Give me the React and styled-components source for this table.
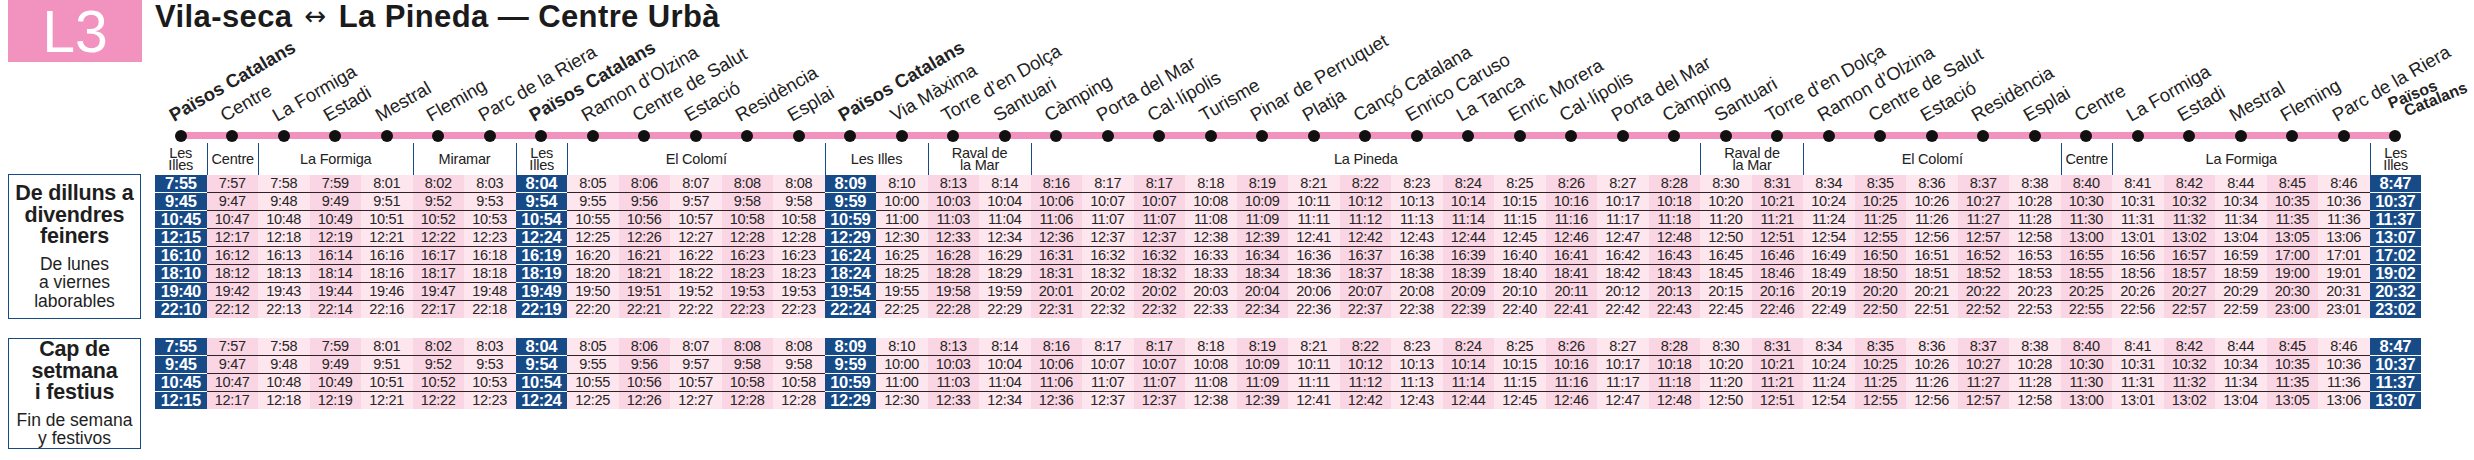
import React from "react";
import styled, { createGlobalStyle } from "styled-components";

const COL = 51.5;
const NCOLS = 44;
const NAVY = "#174b88";
const PINK = "#f292be";
const FONT = `"Liberation Sans", Arial, sans-serif`;

const STOPS = [
  ["Països Catalans", true],
  ["Centre"],
  ["La Formiga"],
  ["Estadi"],
  ["Mestral"],
  ["Fleming"],
  ["Parc de la Riera"],
  ["Països Catalans", true],
  ["Ramon d’Olzina"],
  ["Centre de Salut"],
  ["Estació"],
  ["Residència"],
  ["Esplai"],
  ["Països Catalans", true],
  ["Via Màxima"],
  ["Torre d’en Dolça"],
  ["Santuari"],
  ["Càmping"],
  ["Porta del Mar"],
  ["Cal·lípolis"],
  ["Turisme"],
  ["Pinar de Perruquet"],
  ["Platja"],
  ["Cançó Catalana"],
  ["Enrico Caruso"],
  ["La Tanca"],
  ["Enric Morera"],
  ["Cal·lípolis"],
  ["Porta del Mar"],
  ["Càmping"],
  ["Santuari"],
  ["Torre d’en Dolça"],
  ["Ramon d’Olzina"],
  ["Centre de Salut"],
  ["Estació"],
  ["Residència"],
  ["Esplai"],
  ["Centre"],
  ["La Formiga"],
  ["Estadi"],
  ["Mestral"],
  ["Fleming"],
  ["Parc de la Riera"],
];

const ZONES = [
  { name: ["Les", "Illes"], span: 1 },
  { name: ["Centre"], span: 1 },
  { name: ["La Formiga"], span: 3 },
  { name: ["Miramar"], span: 2 },
  { name: ["Les", "Illes"], span: 1 },
  { name: ["El Colomí"], span: 5 },
  { name: ["Les Illes"], span: 2 },
  { name: ["Raval de", "la Mar"], span: 2 },
  { name: ["La Pineda"], span: 13 },
  { name: ["Raval de", "la Mar"], span: 2 },
  { name: ["El Colomí"], span: 5 },
  { name: ["Centre"], span: 1 },
  { name: ["La Formiga"], span: 5 },
  { name: ["Les", "Illes"], span: 1 },
];

const OFFSETS = [
  0, 2, 3, 4, 6, 7, 8, 9, 10, 11, 12, 13, 13, 14, 15, 18, 19, 21, 22, 22, 23,
  24, 26, 27, 28, 29, 30, 31, 32, 33, 35, 36, 39, 40, 41, 42, 43, 45, 46, 47,
  49, 50, 51, 52,
];
const MAJOR = new Set([0, 7, 13, 43]);

const WEEKDAY = ["7:55", "9:45", "10:45", "12:15", "16:10", "18:10", "19:40", "22:10"];
const WEEKEND = ["7:55", "9:45", "10:45", "12:15"];

const toMin = (s) => {
  const [h, m] = s.split(":").map(Number);
  return h * 60 + m;
};
const fmt = (t) => `${Math.floor(t / 60)}:${String(t % 60).padStart(2, "0")}`;

const GlobalStyle = createGlobalStyle`
  html, body { margin: 0; padding: 0; background: #fff; }
  body { font-family: ${FONT}; color: #1f1f1f; }
`;

const Page = styled.div`
  width: 2474px;
  height: 460px;
  box-sizing: border-box;
  padding-left: 8px;
  overflow: hidden;
`;

const TitleRow = styled.header`
  display: flex;
  align-items: flex-start;
  gap: 13px;
  height: 62px;
`;

const Badge = styled.div`
  width: 134px;
  height: 62px;
  background: ${PINK};
  color: #fff;
  display: flex;
  align-items: center;
  justify-content: center;
  font-size: 59px;
  line-height: 1;
  padding-top: 2px;
  box-sizing: border-box;
`;

const Title = styled.h1`
  margin: 0;
  padding-top: 2px;
  font-size: 31px;
  line-height: 30px;
  font-weight: 700;
  letter-spacing: 0.4px;
  color: #1b1b1b;
  white-space: nowrap;
`;

const Arrow = styled.span`
  font-family: "DejaVu Sans", ${FONT};
  font-weight: 400;
  font-size: 26px;
  position: relative;
  top: -2px;
  margin: 0 3px;
`;

const Track = styled.div`
  margin-left: 147px;
  width: ${NCOLS * COL}px;
  height: 81px;
  display: grid;
  grid-template-columns: repeat(${NCOLS}, ${COL}px);
  position: relative;

  &::before {
    content: "";
    position: absolute;
    left: ${COL / 2}px;
    right: ${COL / 2}px;
    top: 70px;
    height: 7px;
    background: ${PINK};
  }
`;

const Stop = styled.div`
  position: relative;
  display: flex;
  justify-content: center;
  align-items: flex-end;
  padding-bottom: 1px;
`;

const Dot = styled.span`
  width: 12px;
  height: 12px;
  border-radius: 50%;
  background: #111;
  position: relative;
  z-index: 1;
`;

const StopName = styled.span`
  position: absolute;
  left: ${COL / 2 - 7}px;
  top: 45px;
  font-size: 18.5px;
  line-height: 18px;
  font-weight: ${(p) => (p.$bold ? 700 : 400)};
  white-space: nowrap;
  color: #222;
  transform-origin: 0 15px;
  transform: rotate(-30deg);
`;

const LastStopName = styled.span`
  position: absolute;
  left: ${COL / 2 + 1}px;
  top: 34px;
  font-size: 16px;
  line-height: 13px;
  font-weight: 700;
  white-space: nowrap;
  color: #222;
  transform-origin: 0 100%;
  transform: rotate(-22deg);
  display: flex;
  flex-direction: column;
`;

const LastLine = styled.span`
  margin-left: ${(p) => p.$indent || 0}px;
`;

const Zones = styled.div`
  margin-left: 147px;
  height: 32px;
  display: grid;
  grid-template-columns: repeat(${NCOLS}, ${COL}px);
`;

const Zone = styled.div`
  grid-column: span ${(p) => p.$span};
  border-left: ${(p) => (p.$first ? "none" : `1.5px solid ${NAVY}`)};
  display: flex;
  flex-direction: column;
  align-items: center;
  justify-content: center;
  text-align: center;
  font-size: 14.5px;
  line-height: ${(p) => (p.$lines > 1 ? "12px" : "16px")};
  letter-spacing: -0.2px;
  color: #222;
`;

const Section = styled.section`
  display: flex;
  align-items: flex-start;
  gap: 14px;
  margin-top: ${(p) => p.$top || 0}px;
`;

const LabelBox = styled.div`
  box-sizing: border-box;
  width: 133px;
  height: ${(p) => p.$h}px;
  margin-top: ${(p) => p.$shift || 0}px;
  border: 1.5px solid ${NAVY};
  display: flex;
  flex-direction: column;
  align-items: center;
  justify-content: center;
  gap: 7px;
  text-align: center;
  color: #1e1e1e;
`;

const DayTitle = styled.div`
  font-weight: 700;
  font-size: 21.5px;
  line-height: 21.5px;
  letter-spacing: -0.2px;
`;

const DayNote = styled.div`
  font-size: 17.5px;
  line-height: 18.5px;
`;

const Timetable = styled.div`
  display: grid;
  grid-template-columns: repeat(${NCOLS}, ${COL}px);
`;

const Time = styled.div`
  height: 17px;
  line-height: 17px;
  text-align: center;
  white-space: nowrap;
  border-top: ${(p) =>
    p.$sep ? `1px solid ${p.$major ? "#ffffff" : "#2e2428"}` : "none"};
  background: ${(p) =>
    p.$major ? NAVY : p.$stripe ? "#fad5e3" : "#fde6ee"};
  color: ${(p) => (p.$major ? "#fff" : "#262626")};
  font-weight: ${(p) => (p.$major ? 700 : 400)};
  font-size: ${(p) => (p.$major ? "16.5px" : "14.5px")};
  letter-spacing: ${(p) => (p.$major ? "-0.4px" : "-0.3px")};
`;

function Rows({ starts }) {
  return (
    <Timetable>
      {starts.map((s, r) =>
        OFFSETS.map((o, c) => (
          <Time
            key={`${r}-${c}`}
            $sep={r > 0}
            $major={MAJOR.has(c)}
            $stripe={c % 2 === 1}
          >
            {fmt(toMin(s) + o)}
          </Time>
        ))
      )}
    </Timetable>
  );
}

export default function App() {
  return (
    <>
      <GlobalStyle />
      <Page>
        <TitleRow>
          <Badge>L3</Badge>
          <Title>
            Vila-seca <Arrow>↔</Arrow> La Pineda — Centre Urbà
          </Title>
        </TitleRow>

        <Track>
          {STOPS.map(([name, bold], i) => (
            <Stop key={i}>
              <StopName $bold={bold}>{name}</StopName>
              <Dot />
            </Stop>
          ))}
          <Stop>
            <LastStopName>
              <LastLine>Països</LastLine>
              <LastLine $indent={12}>Catalans</LastLine>
            </LastStopName>
            <Dot />
          </Stop>
        </Track>

        <Zones>
          {ZONES.map((z, i) => (
            <Zone key={i} $span={z.span} $first={i === 0} $lines={z.name.length}>
              {z.name.map((l, j) => (
                <span key={j}>{l}</span>
              ))}
            </Zone>
          ))}
        </Zones>

        <Section>
          <LabelBox $h={145} $shift={-1}>
            <DayTitle>
              De dilluns a<br />
              divendres<br />
              feiners
            </DayTitle>
            <DayNote>
              De lunes<br />
              a viernes<br />
              laborables
            </DayNote>
          </LabelBox>
          <Rows starts={WEEKDAY} />
        </Section>

        <Section $top={19}>
          <LabelBox $h={111}>
            <DayTitle>
              Cap de<br />
              setmana<br />
              i festius
            </DayTitle>
            <DayNote>
              Fin de semana<br />
              y festivos
            </DayNote>
          </LabelBox>
          <Rows starts={WEEKEND} />
        </Section>
      </Page>
    </>
  );
}
